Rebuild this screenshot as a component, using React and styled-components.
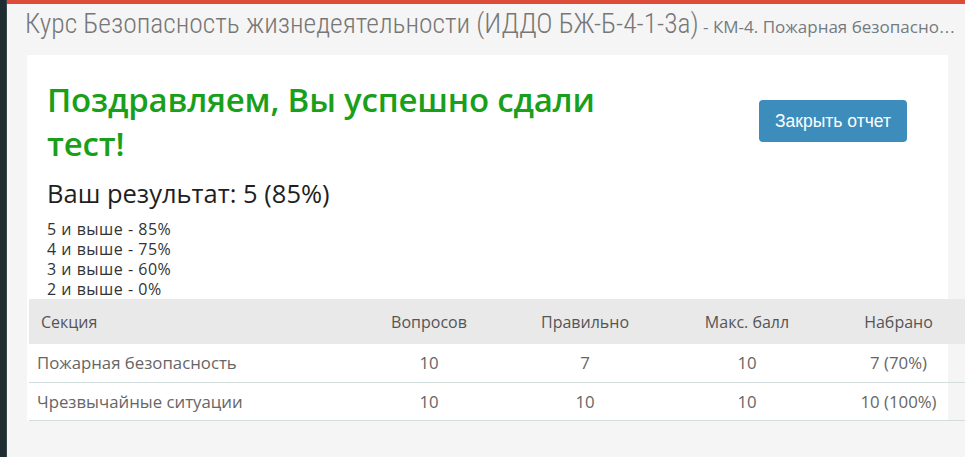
import React from "react";
import styled, { createGlobalStyle } from "styled-components";

const GlobalStyle = createGlobalStyle`
  html, body {
    margin: 0;
    padding: 0;
    background: #f5f5f5;
    overflow: hidden;
  }
  * {
    box-sizing: border-box;
  }
`;

const sections = [
  { name: "Пожарная безопасность", questions: 10, correct: 7, max: 10, score: "7 (70%)" },
  { name: "Чрезвычайные ситуации", questions: 10, correct: 10, max: 10, score: "10 (100%)" }
];

const grades = ["5 и выше - 85%", "4 и выше - 75%", "3 и выше - 60%", "2 и выше - 0%"];

const App = () => {
  return (
    <Page>
      <GlobalStyle />
      <Sidebar />
      <Main>
        <TopBar />
        <Header>
          <CourseTitle>Курс Безопасность жизнедеятельности (ИДДО БЖ-Б-4-1-3а)</CourseTitle>
          <SubTitle> - КМ-4. Пожарная безопасность и чрезвычайные ситуации</SubTitle>
        </Header>
        <Card>
          <Summary>
            <ResultCol>
              <Congrats>Поздравляем, Вы успешно сдали тест!</Congrats>
              <Result>Ваш результат: 5 (85%)</Result>
              <Grades>
                {grades.map(g => (
                  <Grade key={g}>{g}</Grade>
                ))}
              </Grades>
            </ResultCol>
            <ActionCol>
              <CloseButton>Закрыть отчет</CloseButton>
            </ActionCol>
          </Summary>
          <Table>
            <colgroup>
              <col style={{ width: 321 }} />
              <col style={{ width: 158 }} />
              <col style={{ width: 154 }} />
              <col style={{ width: 170 }} />
              <col style={{ width: 133 }} />
            </colgroup>
            <thead>
              <tr>
                <Th align="left">Секция</Th>
                <Th>Вопросов</Th>
                <Th>Правильно</Th>
                <Th>Макс. балл</Th>
                <Th>Набрано</Th>
              </tr>
            </thead>
            <tbody>
              {sections.map(s => (
                <Row key={s.name}>
                  <Td align="left">{s.name}</Td>
                  <Td>{s.questions}</Td>
                  <Td>{s.correct}</Td>
                  <Td>{s.max}</Td>
                  <Td>{s.score}</Td>
                </Row>
              ))}
            </tbody>
          </Table>
        </Card>
      </Main>
    </Page>
  );
};

const Page = styled.div`
  display: flex;
  width: 965px;
  height: 457px;
  background: #f5f5f5;
`;

const Sidebar = styled.div`
  width: 7px;
  flex-shrink: 0;
  background: #1f2c32;
  border-right: 1px solid #3a474d;
`;

const Main = styled.div`
  flex: 1;
  min-width: 0;
  display: flex;
  flex-direction: column;
`;

const TopBar = styled.div`
  height: 4px;
  background: #dd4b39;
`;

const Header = styled.div`
  width: 951px;
  height: 51px;
  padding: 4px 0 0 18px;
  white-space: nowrap;
  overflow: hidden;
  text-overflow: ellipsis;
  color: #777;
  line-height: 32px;
`;

const CourseTitle = styled.span`
  font-family: "Roboto Condensed", "DejaVu Sans Condensed", Roboto, sans-serif;
  font-size: 27.5px;
  font-weight: 300;
`;

const SubTitle = styled.span`
  font-family: "Open Sans", sans-serif;
  font-size: 17px;
  color: #737b82;
`;

const Card = styled.div`
  margin: 0 17px 0 20px;
  background: #fff;
  padding-left: 2px;
`;

const Summary = styled.div`
  display: flex;
  justify-content: space-between;
  padding: 23px 41px 0 18px;
`;

const ResultCol = styled.div`
  width: 600px;
`;

const ActionCol = styled.div`
  padding-top: 22px;
`;

const Congrats = styled.h1`
  margin: 0;
  font-family: "Open Sans", sans-serif;
  font-size: 33px;
  font-weight: 600;
  line-height: 44px;
  letter-spacing: -0.2px;
  color: #1a9f1a;
`;

const Result = styled.div`
  margin-top: 14px;
  font-family: "Open Sans", sans-serif;
  font-size: 25.5px;
  line-height: 26px;
  color: #1f1f1f;
`;

const Grades = styled.div`
  margin-top: 13px;
`;

const Grade = styled.div`
  font-family: "Open Sans", sans-serif;
  font-size: 16px;
  line-height: 20px;
  letter-spacing: 0.5px;
  color: #333;
`;

const CloseButton = styled.button`
  width: 148px;
  height: 42px;
  border: none;
  border-radius: 4px;
  background: #3c8dbc;
  color: #fff;
  font-family: "Liberation Sans", Arial, sans-serif;
  font-size: 17.5px;
  cursor: pointer;
`;

const Table = styled.table`
  width: 936px;
  border-collapse: collapse;
  table-layout: fixed;
  font-family: "Open Sans", sans-serif;
  font-size: 16px;
`;

const Th = styled.th`
  height: 45px;
  padding: 0 0 0 ${props => (props.align === "left" ? "12px" : "0")};
  background: #e9e9e9;
  font-weight: 400;
  color: #555;
  text-align: ${props => props.align || "center"};
`;

const Row = styled.tr`
  border-bottom: 1px solid #d2dedd;
`;

const Td = styled.td`
  height: 38px;
  padding: 0 0 0 ${props => (props.align === "left" ? "8px" : "0")};
  font-size: 16.8px;
  color: #666;
  text-align: ${props => props.align || "center"};
`;

export default App;
